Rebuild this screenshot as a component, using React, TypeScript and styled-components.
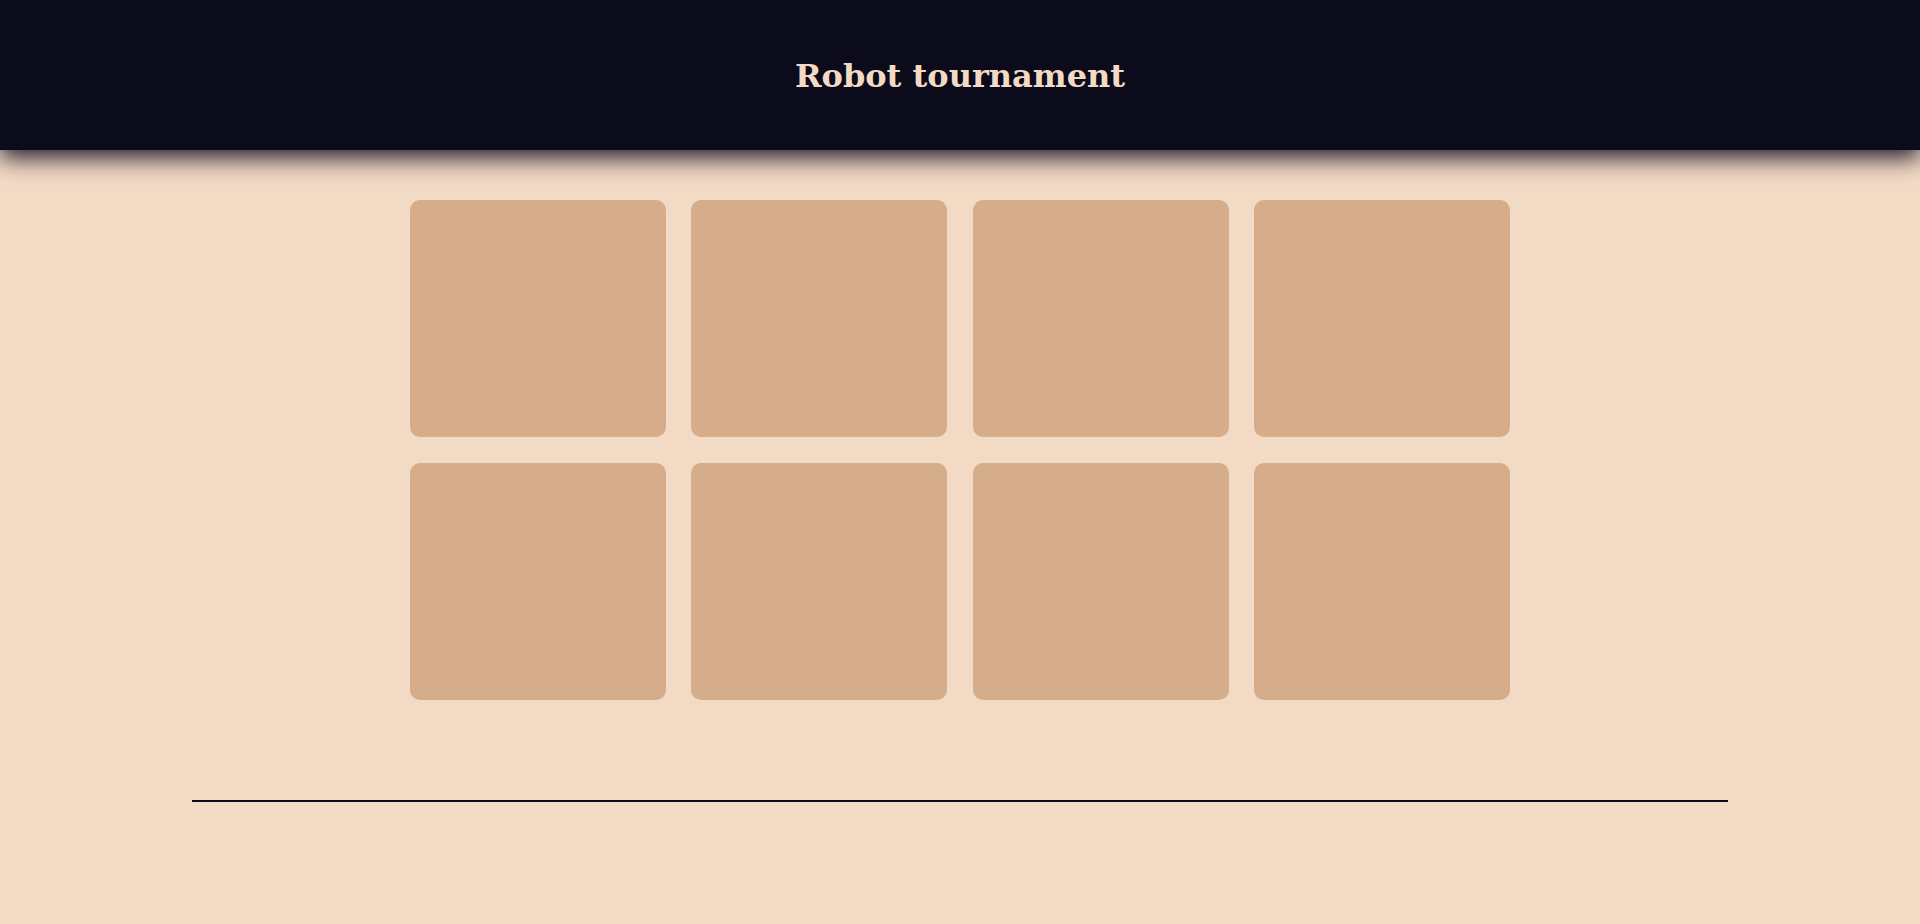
import React from "react";
import styled, { createGlobalStyle } from "styled-components";

const GlobalStyle = createGlobalStyle`
  html, body {
    margin: 0;
    padding: 0;
    background: #f2dac4;
    font-family: "DejaVu Serif", serif;
  }
`;

const Header = styled.header`
  height: 150px;
  background: #0c0b1c;
  display: flex;
  align-items: center;
  justify-content: center;
  box-shadow: 0 8px 22px rgba(12, 11, 28, 0.9);
  position: relative;
  z-index: 1;
`;

const Title = styled.h1`
  margin: 2px 0 0;
  color: #f2dac4;
  font-family: "DejaVu Serif", serif;
  font-weight: bold;
  font-size: 32px;
  line-height: 1;
`;

const Main = styled.main`
  display: flex;
  flex-direction: column;
  align-items: center;
  padding-top: 50px;
`;

const Grid = styled.div`
  display: grid;
  grid-template-columns: repeat(4, 256px);
  grid-auto-rows: 237px;
  gap: 25.6px;
`;

const Card = styled.div`
  background: #d5ad8a;
  border-radius: 10px;
`;

const Divider = styled.hr`
  width: 80%;
  height: 2px;
  margin: 100px 0 0;
  border: none;
  background: #0c0b1c;
`;

export default function App() {
  return (
    <>
      <GlobalStyle />
      <Header>
        <Title>Robot tournament</Title>
      </Header>
      <Main>
        <Grid>
          {Array.from({ length: 8 }).map((_, i) => (
            <Card key={i} />
          ))}
        </Grid>
        <Divider />
      </Main>
    </>
  );
}
